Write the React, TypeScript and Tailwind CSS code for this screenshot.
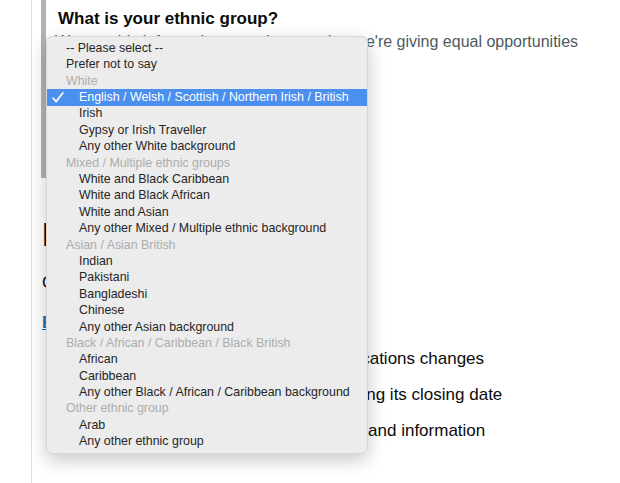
import React from "react";

type Row = { label: string; kind: "top" | "group" | "opt"; selected?: boolean };

const rows: Row[] = [
  { label: "-- Please select --", kind: "top" },
  { label: "Prefer not to say", kind: "top" },
  { label: "White", kind: "group" },
  { label: "English / Welsh / Scottish / Northern Irish / British", kind: "opt", selected: true },
  { label: "Irish", kind: "opt" },
  { label: "Gypsy or Irish Traveller", kind: "opt" },
  { label: "Any other White background", kind: "opt" },
  { label: "Mixed / Multiple ethnic groups", kind: "group" },
  { label: "White and Black Caribbean", kind: "opt" },
  { label: "White and Black African", kind: "opt" },
  { label: "White and Asian", kind: "opt" },
  { label: "Any other Mixed / Multiple ethnic background", kind: "opt" },
  { label: "Asian / Asian British", kind: "group" },
  { label: "Indian", kind: "opt" },
  { label: "Pakistani", kind: "opt" },
  { label: "Bangladeshi", kind: "opt" },
  { label: "Chinese", kind: "opt" },
  { label: "Any other Asian background", kind: "opt" },
  { label: "Black / African / Caribbean / Black British", kind: "group" },
  { label: "African", kind: "opt" },
  { label: "Caribbean", kind: "opt" },
  { label: "Any other Black / African / Caribbean background", kind: "opt" },
  { label: "Other ethnic group", kind: "group" },
  { label: "Arab", kind: "opt" },
  { label: "Any other ethnic group", kind: "opt" },
];

const Check = () => (
  <svg className="absolute left-[5px] top-[3px]" width="12" height="11" viewBox="0 0 12 11" fill="none">
    <path d="M1.2 6.2 L4.2 9.6 L10.8 1" stroke="white" strokeWidth="1.7" strokeLinecap="round" strokeLinejoin="round" />
  </svg>
);

const Dropdown = () => (
  <div className="absolute left-[46px] top-[36px] w-[322px] rounded-[6px] border border-[#d6d6d6] bg-[#ececec] py-[3px] shadow-[0_6px_18px_rgba(0,0,0,0.22)] font-['Liberation_Sans',Arial,sans-serif] text-[12.4px]">
    {rows.map((r) => (
      <div
        key={r.label}
        className={
          "relative flex h-[16.4px] items-center whitespace-nowrap " +
          (r.selected ? "bg-[#4b8fef] !text-white " : "") +
          (r.kind === "group" ? "pl-[19px] text-[#acacac]" : r.kind === "top" ? "pl-[19px] text-[#262626]" : "pl-[32px] text-[#262626]")
        }
      >
        {r.selected && <Check />}
        {r.label}
      </div>
    ))}
  </div>
);

export default function App() {
  return (
    <div className="relative h-[483px] w-[620px] overflow-hidden bg-white font-['Liberation_Sans',Arial,sans-serif] text-[#0b0c0c]">
      <div className="ml-[31px] h-full border-l border-[#dedede] pl-[9px]">
        <div className="h-[178px] border-l-[5px] border-[#b1b4b6] pl-[12px] pt-[8px]">
          <h1 className="text-[17px] font-bold leading-[22px]">What is your ethnic group?</h1>
          <p className="-ml-[3px] mt-[1px] text-[16px] leading-[22px] text-[#505a5f]">
            We use this information to make sure that we're giving equal opportunities
          </p>
        </div>
        <h2 className="mt-[36px] pl-[1px] text-[34px] font-bold leading-[40px]">Important dates</h2>
        <p className="mt-[18px] pl-[1px] text-[17px] leading-[22px]">Contact the employer</p>
        <a href="#" className="mt-[18px] block pl-[1px] text-[17px] font-bold leading-[22px] text-[#1d70b8] underline">
          Email the employer
        </a>
        <ul className="mt-[14px] space-y-[14px] pl-[22px] text-[17px] leading-[22px]">
          <li className="ml-[2px]">Get an email alert when the job's qualifications changes</li>
          <li className="-ml-[2px]">This job advert could close before reaching its closing date</li>
          <li className="-ml-[3px]">Review the full job description, guidance and information</li>
        </ul>
      </div>
      <Dropdown />
    </div>
  );
}
